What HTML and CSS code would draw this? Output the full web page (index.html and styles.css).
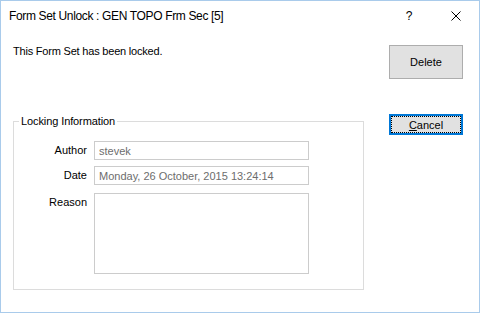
FILE: index.html
```html
<!DOCTYPE html>
<html>
<head>
<meta charset="utf-8">
<link rel="stylesheet" href="styles.css">
</head>
<body>
<div class="window">
  <div class="titlebar">
    <span class="title">Form Set Unlock : GEN TOPO Frm Sec [5]</span>
    <span class="help">?</span>
    <span class="close">
      <svg width="10" height="10" viewBox="0 0 10 10"><path d="M0.5 0.5 L9.5 9.5 M9.5 0.5 L0.5 9.5" stroke="#000" stroke-width="1" fill="none"/></svg>
    </span>
  </div>
  <div class="client">
    <div class="main">
      <div class="message">This Form Set has been locked.</div>
      <fieldset class="group">
        <legend>Locking Information</legend>
        <div class="form">
          <label class="lbl">Author</label>
          <input class="field" readonly value="stevek">
          <label class="lbl date-row">Date</label>
          <input class="field date-row" readonly value="Monday, 26 October, 2015 13:24:14">
          <label class="lbl reason-row">Reason</label>
          <textarea class="field reason reason-row" readonly></textarea>
        </div>
      </fieldset>
    </div>
    <div class="side">
      <button class="btn delete">Delete</button>
      <button class="btn cancel"><u>C</u>ancel</button>
    </div>
  </div>
</div>
</body>
</html>
```
FILE: styles.css
```css
html, body {
  margin: 0;
  padding: 0;
  background: #ffffff;
}
body {
  font-family: "Liberation Sans", Arial, sans-serif;
  font-size: 11px;
  color: #000;
}
.window {
  width: 478px;
  height: 311px;
  border: 1px solid #a9cbeb;
  background: #fff;
  display: flex;
  flex-direction: column;
}
.titlebar {
  height: 30px;
  display: flex;
  align-items: center;
  padding-left: 8px;
}
.title {
  font-size: 12px;
  letter-spacing: -0.35px;
  flex: 1;
  color: #000;
}
.help {
  font-size: 12px;
  width: 10px;
  text-align: center;
  margin-right: 37px;
}
.close {
  display: flex;
  width: 10px;
  height: 10px;
  margin-right: 18px;
  margin-top: -1px;
}
.client {
  display: flex;
  flex: 1;
}
.main {
  flex: 1;
  padding-top: 14px;
  padding-left: 12px;
}
.message {
  line-height: 13px;
  height: 13px;
  letter-spacing: -0.2px;
}
.group {
  margin: 57px 0 0 0;
  padding: 13px 0 15px 0;
  width: 349px;
  border: 1px solid #dcdcdc;
  box-sizing: content-box;
}
.group legend {
  padding: 0 2px;
  margin-left: 5px;
  line-height: 13px;
  font-size: 11px;
  letter-spacing: -0.1px;
}
.form {
  display: grid;
  grid-template-columns: 73px 215px;
  column-gap: 7px;
  align-items: start;
}
.lbl {
  text-align: right;
  line-height: 19px;
  height: 19px;
}
.field {
  box-sizing: border-box;
  width: 215px;
  height: 19px;
  margin: 0;
  border: 1px solid #cccccc;
  background: #fff;
  color: #6d6d6d;
  font-family: "Liberation Sans", Arial, sans-serif;
  font-size: 11px;
  padding: 0 0 0 4px;
  outline: none;
}
.date-row {
  margin-top: 6px;
}
.reason-row {
  margin-top: 8px;
}
.reason {
  height: 81px;
  resize: none;
  padding: 2px 4px;
}
.side {
  width: 74px;
  margin-right: 16px;
  padding-top: 14px;
  display: flex;
  flex-direction: column;
}
.btn {
  box-sizing: border-box;
  width: 74px;
  margin: 0;
  padding: 0;
  background: #e1e1e1;
  border: 1px solid #adadad;
  font-family: "Liberation Sans", Arial, sans-serif;
  font-size: 11px;
  color: #000;
}
.delete {
  height: 34px;
}
.cancel {
  height: 21px;
  margin-top: 35px;
  border: 2px solid #0078d7;
  outline: 1px dotted #000;
  outline-offset: -3px;
}
.cancel u {
  text-decoration-thickness: 1px;
  text-underline-offset: 1px;
}
```
